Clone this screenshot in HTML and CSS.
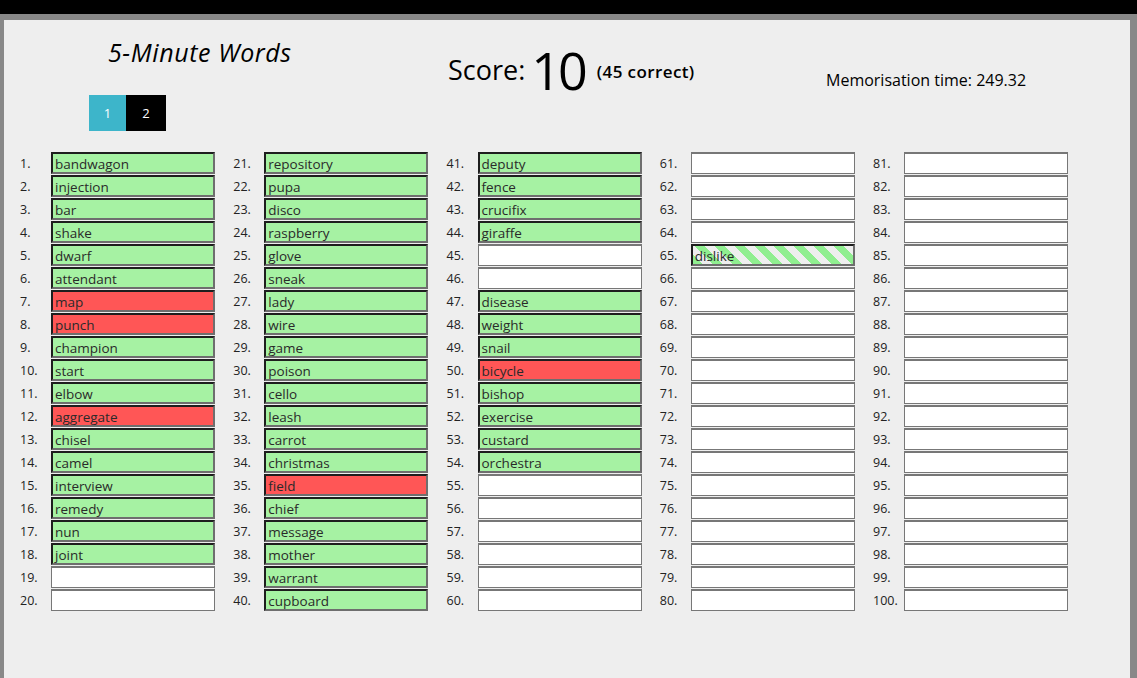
FILE: index.html
```html
<!DOCTYPE html>
<html>
<head>
<meta charset="utf-8">
<link rel="stylesheet" href="styles.css">
</head>
<body>
<div class="topbar"></div>
<div class="frame">
<div class="panel">
  <div class="header">
    <div class="left">
      <div class="title">5-Minute Words</div>
      <div class="pages"><span class="pg on">1</span><span class="pg">2</span></div>
    </div>
    <div class="score">
      <span class="lbl">Score:</span><span class="big">10</span><span class="cnt">(45 correct)</span>
    </div>
    <div class="memo">Memorisation time: 249.32</div>
  </div>
  <div class="grid">
    <div class="col">
      <div class="row"><span class="n">1.</span><span class="b g">bandwagon</span></div>
      <div class="row"><span class="n">2.</span><span class="b g">injection</span></div>
      <div class="row"><span class="n">3.</span><span class="b g">bar</span></div>
      <div class="row"><span class="n">4.</span><span class="b g">shake</span></div>
      <div class="row"><span class="n">5.</span><span class="b g">dwarf</span></div>
      <div class="row"><span class="n">6.</span><span class="b g">attendant</span></div>
      <div class="row"><span class="n">7.</span><span class="b r">map</span></div>
      <div class="row"><span class="n">8.</span><span class="b r">punch</span></div>
      <div class="row"><span class="n">9.</span><span class="b g">champion</span></div>
      <div class="row"><span class="n">10.</span><span class="b g">start</span></div>
      <div class="row"><span class="n">11.</span><span class="b g">elbow</span></div>
      <div class="row"><span class="n">12.</span><span class="b r">aggregate</span></div>
      <div class="row"><span class="n">13.</span><span class="b g">chisel</span></div>
      <div class="row"><span class="n">14.</span><span class="b g">camel</span></div>
      <div class="row"><span class="n">15.</span><span class="b g">interview</span></div>
      <div class="row"><span class="n">16.</span><span class="b g">remedy</span></div>
      <div class="row"><span class="n">17.</span><span class="b g">nun</span></div>
      <div class="row"><span class="n">18.</span><span class="b g">joint</span></div>
      <div class="row"><span class="n">19.</span><span class="b w"></span></div>
      <div class="row"><span class="n">20.</span><span class="b w"></span></div>
    </div>
    <div class="col">
      <div class="row"><span class="n">21.</span><span class="b g">repository</span></div>
      <div class="row"><span class="n">22.</span><span class="b g">pupa</span></div>
      <div class="row"><span class="n">23.</span><span class="b g">disco</span></div>
      <div class="row"><span class="n">24.</span><span class="b g">raspberry</span></div>
      <div class="row"><span class="n">25.</span><span class="b g">glove</span></div>
      <div class="row"><span class="n">26.</span><span class="b g">sneak</span></div>
      <div class="row"><span class="n">27.</span><span class="b g">lady</span></div>
      <div class="row"><span class="n">28.</span><span class="b g">wire</span></div>
      <div class="row"><span class="n">29.</span><span class="b g">game</span></div>
      <div class="row"><span class="n">30.</span><span class="b g">poison</span></div>
      <div class="row"><span class="n">31.</span><span class="b g">cello</span></div>
      <div class="row"><span class="n">32.</span><span class="b g">leash</span></div>
      <div class="row"><span class="n">33.</span><span class="b g">carrot</span></div>
      <div class="row"><span class="n">34.</span><span class="b g">christmas</span></div>
      <div class="row"><span class="n">35.</span><span class="b r">field</span></div>
      <div class="row"><span class="n">36.</span><span class="b g">chief</span></div>
      <div class="row"><span class="n">37.</span><span class="b g">message</span></div>
      <div class="row"><span class="n">38.</span><span class="b g">mother</span></div>
      <div class="row"><span class="n">39.</span><span class="b g">warrant</span></div>
      <div class="row"><span class="n">40.</span><span class="b g">cupboard</span></div>
    </div>
    <div class="col">
      <div class="row"><span class="n">41.</span><span class="b g">deputy</span></div>
      <div class="row"><span class="n">42.</span><span class="b g">fence</span></div>
      <div class="row"><span class="n">43.</span><span class="b g">crucifix</span></div>
      <div class="row"><span class="n">44.</span><span class="b g">giraffe</span></div>
      <div class="row"><span class="n">45.</span><span class="b w"></span></div>
      <div class="row"><span class="n">46.</span><span class="b w"></span></div>
      <div class="row"><span class="n">47.</span><span class="b g">disease</span></div>
      <div class="row"><span class="n">48.</span><span class="b g">weight</span></div>
      <div class="row"><span class="n">49.</span><span class="b g">snail</span></div>
      <div class="row"><span class="n">50.</span><span class="b r">bicycle</span></div>
      <div class="row"><span class="n">51.</span><span class="b g">bishop</span></div>
      <div class="row"><span class="n">52.</span><span class="b g">exercise</span></div>
      <div class="row"><span class="n">53.</span><span class="b g">custard</span></div>
      <div class="row"><span class="n">54.</span><span class="b g">orchestra</span></div>
      <div class="row"><span class="n">55.</span><span class="b w"></span></div>
      <div class="row"><span class="n">56.</span><span class="b w"></span></div>
      <div class="row"><span class="n">57.</span><span class="b w"></span></div>
      <div class="row"><span class="n">58.</span><span class="b w"></span></div>
      <div class="row"><span class="n">59.</span><span class="b w"></span></div>
      <div class="row"><span class="n">60.</span><span class="b w"></span></div>
    </div>
    <div class="col">
      <div class="row"><span class="n">61.</span><span class="b w"></span></div>
      <div class="row"><span class="n">62.</span><span class="b w"></span></div>
      <div class="row"><span class="n">63.</span><span class="b w"></span></div>
      <div class="row"><span class="n">64.</span><span class="b w"></span></div>
      <div class="row"><span class="n">65.</span><span class="b s">dislike</span></div>
      <div class="row"><span class="n">66.</span><span class="b w"></span></div>
      <div class="row"><span class="n">67.</span><span class="b w"></span></div>
      <div class="row"><span class="n">68.</span><span class="b w"></span></div>
      <div class="row"><span class="n">69.</span><span class="b w"></span></div>
      <div class="row"><span class="n">70.</span><span class="b w"></span></div>
      <div class="row"><span class="n">71.</span><span class="b w"></span></div>
      <div class="row"><span class="n">72.</span><span class="b w"></span></div>
      <div class="row"><span class="n">73.</span><span class="b w"></span></div>
      <div class="row"><span class="n">74.</span><span class="b w"></span></div>
      <div class="row"><span class="n">75.</span><span class="b w"></span></div>
      <div class="row"><span class="n">76.</span><span class="b w"></span></div>
      <div class="row"><span class="n">77.</span><span class="b w"></span></div>
      <div class="row"><span class="n">78.</span><span class="b w"></span></div>
      <div class="row"><span class="n">79.</span><span class="b w"></span></div>
      <div class="row"><span class="n">80.</span><span class="b w"></span></div>
    </div>
    <div class="col">
      <div class="row"><span class="n">81.</span><span class="b w"></span></div>
      <div class="row"><span class="n">82.</span><span class="b w"></span></div>
      <div class="row"><span class="n">83.</span><span class="b w"></span></div>
      <div class="row"><span class="n">84.</span><span class="b w"></span></div>
      <div class="row"><span class="n">85.</span><span class="b w"></span></div>
      <div class="row"><span class="n">86.</span><span class="b w"></span></div>
      <div class="row"><span class="n">87.</span><span class="b w"></span></div>
      <div class="row"><span class="n">88.</span><span class="b w"></span></div>
      <div class="row"><span class="n">89.</span><span class="b w"></span></div>
      <div class="row"><span class="n">90.</span><span class="b w"></span></div>
      <div class="row"><span class="n">91.</span><span class="b w"></span></div>
      <div class="row"><span class="n">92.</span><span class="b w"></span></div>
      <div class="row"><span class="n">93.</span><span class="b w"></span></div>
      <div class="row"><span class="n">94.</span><span class="b w"></span></div>
      <div class="row"><span class="n">95.</span><span class="b w"></span></div>
      <div class="row"><span class="n">96.</span><span class="b w"></span></div>
      <div class="row"><span class="n">97.</span><span class="b w"></span></div>
      <div class="row"><span class="n">98.</span><span class="b w"></span></div>
      <div class="row"><span class="n">99.</span><span class="b w"></span></div>
      <div class="row"><span class="n">100.</span><span class="b w"></span></div>
    </div>
  </div>
</div>
</div>
</body>
</html>
```
FILE: styles.css
```css
html, body {
  margin: 0;
  padding: 0;
}
body {
  background: #888;
  width: 1137px;
  height: 678px;
  overflow: hidden;
  font-family: "Open Sans", "Noto Sans", sans-serif;
  color: #111;
}
.topbar {
  height: 14px;
  background: #000;
}
.frame {
  padding: 6px 7px 0 4px;
}
.panel {
  background: #eee;
  height: 658px;
  box-sizing: border-box;
  padding-left: 16px;
}
.header {
  display: flex;
  height: 132px;
  margin-left: -16px;
}
.left {
  width: 444px;
  display: flex;
  flex-direction: column;
}
.title {
  margin: 20px 0 0 104px;
  font-size: 25px;
  line-height: 25px;
  font-style: italic;
  color: #000;
  letter-spacing: 0.6px;
}
.pages {
  display: flex;
  margin: 30px 0 0 85px;
}
.pg {
  width: 40px;
  height: 36px;
  background: #000;
  color: #fff;
  font-size: 13px;
  display: flex;
  align-items: center;
  justify-content: center;
}
.pg.on {
  width: 37px;
  background: #3db5ca;
}
.score {
  width: 378px;
  display: flex;
  align-items: flex-start;
  color: #000;
}
.lbl {
  margin-top: 36px;
  font-size: 27px;
  line-height: 28px;
}
.big {
  margin: 24px 0 0 6px;
  font-size: 52px;
  line-height: 52px;
  letter-spacing: -3px;
}
.cnt {
  margin: 43px 0 0 12px;
  font-size: 17px;
  line-height: 17px;
  font-weight: 600;
  letter-spacing: 0.4px;
}
.memo {
  margin-top: 52px;
  font-size: 16px;
  line-height: 17px;
  color: #000;
}
.grid {
  display: flex;
  gap: 18.25px;
}
.col {
  width: 195px;
  display: flex;
  flex-direction: column;
  gap: 1px;
}
.row {
  display: flex;
  align-items: center;
  height: 22px;
}
.n {
  width: 31px;
  font-size: 12.5px;
  color: #222;
}
.b {
  box-sizing: border-box;
  width: 164px;
  height: 22px;
  padding-left: 2px;
  font-size: 13.5px;
  line-height: 21px;
  color: #2a2a2a;
  border-style: solid;
  border-width: 2px;
  border-color: #1e1e1e #6e6e6e #6e6e6e #1e1e1e;
  overflow: hidden;
}
.g {
  background: #a6f2a3;
}
.r {
  background: #ff5656;
}
.s {
  background: repeating-linear-gradient(45deg, #90ee90 0 7px, #eeeeee 7px 14px);
}
.w {
  background: #fff;
  border-width: 2px 1px 1px 1px;
  border-color: #777;
}
```
